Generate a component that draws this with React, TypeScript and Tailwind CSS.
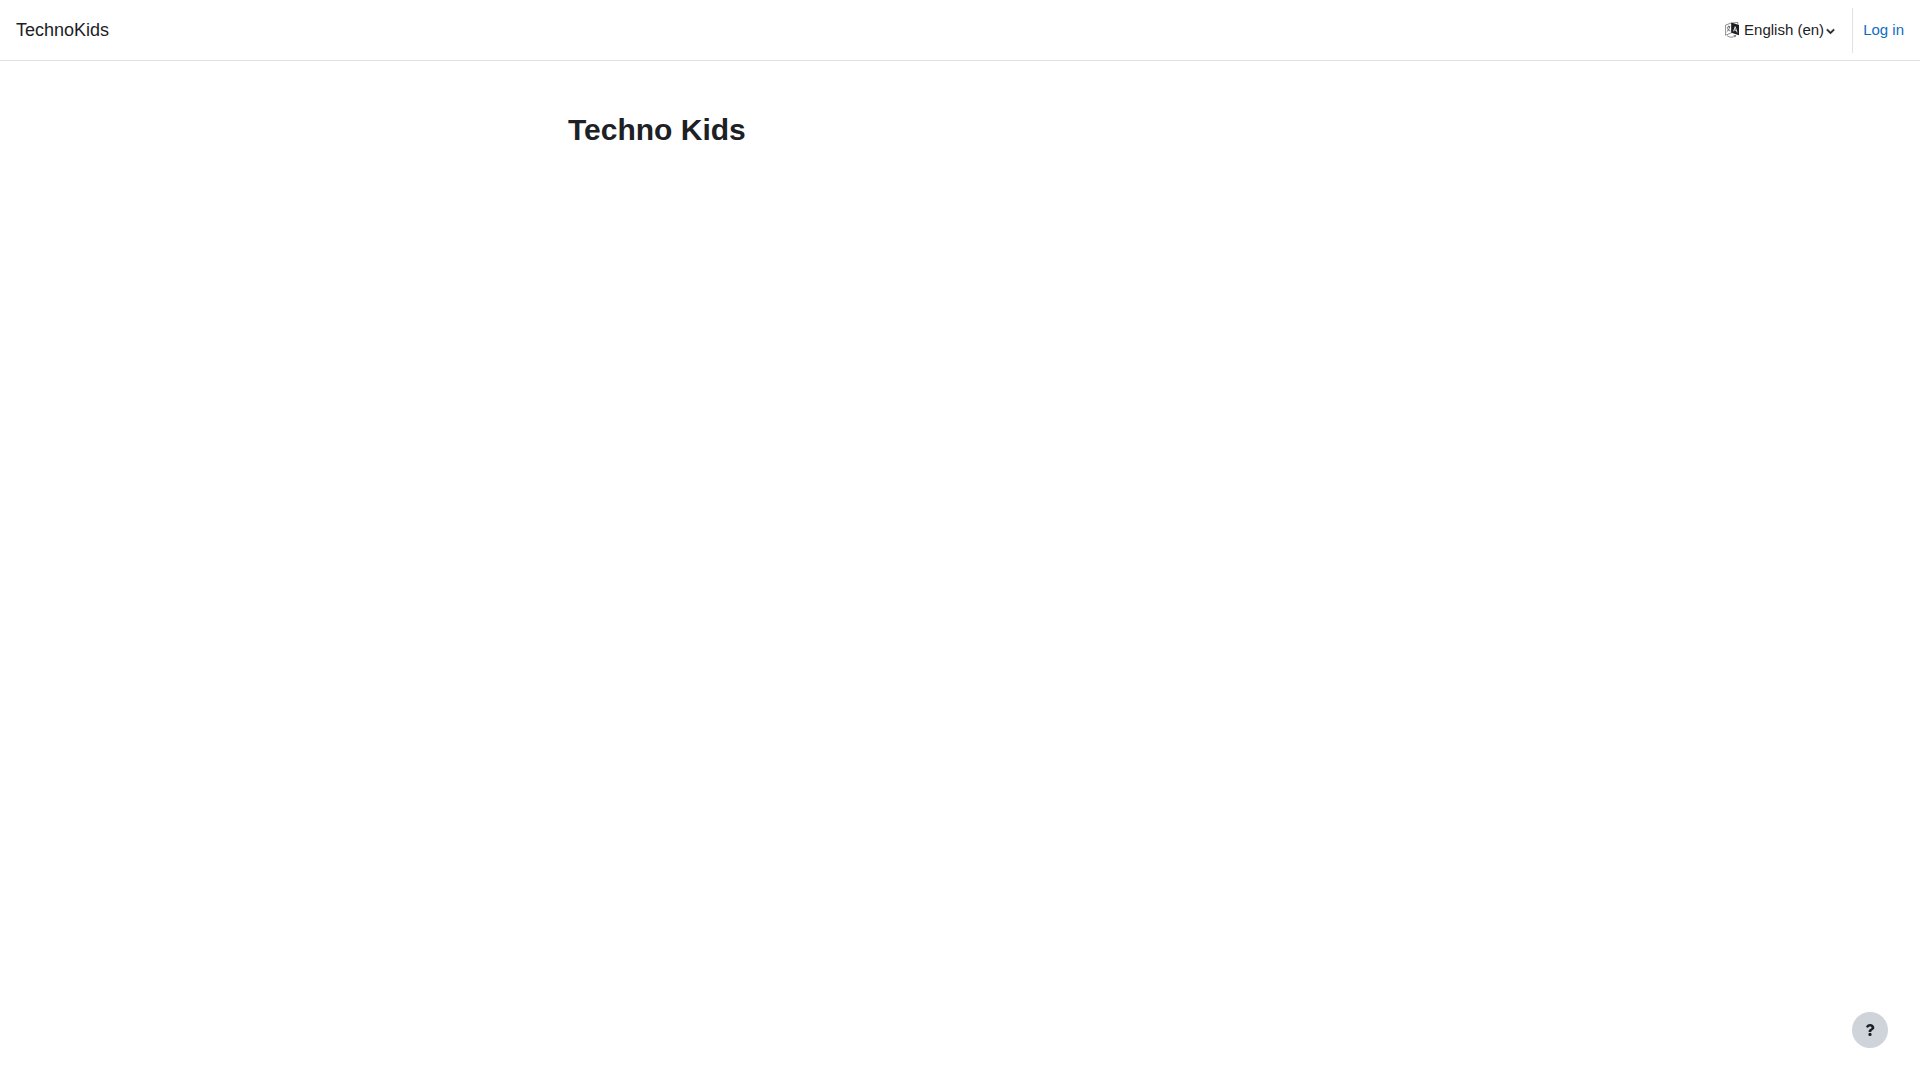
import { FaChevronDown, FaQuestion } from "react-icons/fa";

function LanguageIcon() {
  return (
    <svg viewBox="0 0 14 16" className="h-4 w-3.5" fill="none" stroke="currentColor" aria-hidden="true">
      <path d="M6.3 .6 14 3v10.200L6.300 10.800Z" fill="currentColor" stroke="none" />
      <path d="M.4 3.2 6.5 .9v10L.4 13.2Z" strokeWidth=".5" />
      <path d="M7 1 12.8 .4v2.2" strokeWidth=".5" />
      <path d="M2 13.5c2 1.9 5.500 2.400 8.500.3M8.600 13.500l2.200.1-.8 1.600" strokeWidth=".5" />
      <path d="M1.800 5.500 5.200 4.300M3.400 3.700l.3 1.100M4.700 4.800C4.300 7 3.200 8.700 1.600 10M2.300 6.200c.8 1.700 1.900 2.500 3.200 2.800" strokeWidth=".6" />
      <path d="M8.500 9.300 10.200 4.700l1.900 5.700M9.100 7.800l2.300.7" stroke="white" strokeWidth=".8" />
    </svg>
  );
}

export default function App() {
  return (
    <div className="min-h-screen bg-white font-['Liberation_Sans',Arial,sans-serif] text-[15px] text-[#1d2125]">
      <header className="flex h-[61px] items-center justify-between border-b border-[#dee2e6] px-4">
        <a href="#" className="text-lg">TechnoKids</a>
        <div className="flex items-center">
          <button type="button" aria-haspopup="menu" className="flex items-center pr-[17px]">
            <LanguageIcon />
            <span className="ml-[5px] mr-0.5">English (en)</span>
            <FaChevronDown className="mt-0.5 size-[9px]" stroke="currentColor" strokeWidth={30} aria-hidden="true" />
          </button>
          <div className="flex h-[45px] items-center border-l border-[#dee2e6] pl-2.5">
            <a href="#" className="text-[#0f6cbf]">Log in</a>
          </div>
        </div>
      </header>
      <main className="mx-auto max-w-[832px] px-6 pt-[46px]">
        <h1 className="text-3xl leading-[45px] font-bold">Techno Kids</h1>
      </main>
      <button
        type="button"
        aria-label="Show footer"
        className="fixed right-8 bottom-8 flex size-9 items-center justify-center rounded-full bg-[#ced4da]"
      >
        <FaQuestion className="size-3" aria-hidden="true" />
      </button>
    </div>
  );
}
